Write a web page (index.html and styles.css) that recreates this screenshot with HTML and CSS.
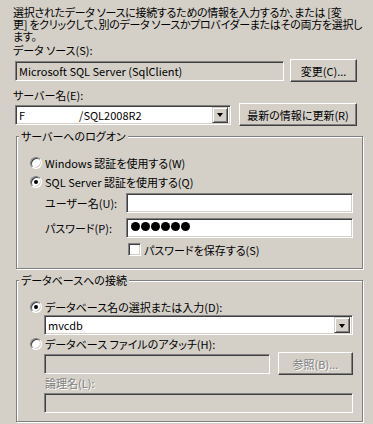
FILE: index.html
```html
<!DOCTYPE html>
<html>
<head>
<meta charset="UTF-8">
<title>接続の追加</title>
<link rel="stylesheet" href="styles.css">
</head>
<body>
<div class="dlg">

<p class="intro">選択されたデータ ソースに接続するための情報を入力するか、または [変<br>更] をクリックして、別のデータ ソースかプロバイダーまたはその両方を選択し<br>ます。</p>

<div class="lbl lblSrc">データ ソース(S):</div>
<div class="row rowSrc">
<div class="edit readonly editSrc">Microsoft SQL Server (SqlClient)</div>
<button class="btn btnChange">変更(C)...</button>
</div>

<div class="lbl lblSrv">サーバー名(E):</div>
<div class="row rowSrv">
<div class="combo comboSrv"><span class="comboText">F<span class="hidden"></span>/SQL2008R2</span><span class="dropBtn"><span class="arrow"></span></span></div>
<button class="btn btnRefresh">最新の情報に更新(R)</button>
</div>

<fieldset class="group grpLogon">
<legend>サーバーへのログオン</legend>
<div class="groupBody">
<div class="opt optWin"><span class="radio"></span>Windows 認証を使用する(W)</div>
<div class="opt optSql"><span class="radio on"></span>SQL Server 認証を使用する(Q)</div>
<div class="field fieldUser"><span class="fieldLbl">ユーザー名(U):</span><div class="edit editCred"></div></div>
<div class="field fieldPwd"><span class="fieldLbl">パスワード(P):</span><div class="edit editCred pwd"><span class="dot"></span><span class="dot"></span><span class="dot"></span><span class="dot"></span><span class="dot"></span><span class="dot"></span></div></div>
<div class="chk"><span class="box"></span>パスワードを保存する(S)</div>
</div>
</fieldset>

<fieldset class="group grpDb">
<legend>データベースへの接続</legend>
<div class="groupBody">
<div class="opt optName"><span class="radio on"></span>データベース名の選択または入力(D):</div>
<div class="combo comboDb"><span class="comboText">mvcdb</span><span class="dropBtn"><span class="arrow"></span></span></div>
<div class="opt optFile"><span class="radio"></span>データベース ファイルのアタッチ(H):</div>
<div class="row rowFile">
<div class="edit readonly editFile"></div>
<button class="btn btnBrowse disabled">参照(B)...</button>
</div>
<div class="lbl disabled lblLogical">論理名(L):</div>
<div class="edit readonly editLogical"></div>
</div>
</fieldset>

</div>
</body>
</html>
```

FILE: styles.css
```css
body{
margin: 0;
background: #d4d0c8;
color: #000;
font: 11px/12px "Noto Sans CJK JP", sans-serif;
font-feature-settings: "palt";
}

.dlg{
width: 373px;
height: 424px;
overflow: hidden;
}

.intro{
margin: 0;
padding: 6px 0 0 13px;
white-space: nowrap;
letter-spacing: -0.3px;
}

.lbl{
height: 12px;
padding-left: 13px;
white-space: nowrap;
}

.lblSrc{
margin-top: 2px;
}

.lblSrv{
margin-top: 7px;
}

.row{
display: flex;
align-items: center;
}

.rowSrc{
height: 23px;
margin: 3px 0 0 15px;
gap: 6px;
}

.rowSrv{
height: 23px;
margin: 2px 0 0 15px;
gap: 8px;
}

/* sunken text boxes */
.edit, .combo{
box-sizing: border-box;
height: 20px;
background: #fff;
border: 1px solid;
border-color: #808080 #fff #fff #808080;
box-shadow: inset 1px 1px #404040, inset -1px -1px #d4d0c8;
padding: 3px 0 0 3px;
white-space: nowrap;
overflow: hidden;
}

.readonly{
background: #d4d0c8;
}

.editSrc{
width: 269px;
}

/* raised buttons */
.btn{
box-sizing: border-box;
height: 23px;
margin: 0;
padding: 0;
font: inherit;
color: #000;
background: #d4d0c8;
border: 1px solid;
border-color: #fff #404040 #404040 #fff;
box-shadow: inset -1px -1px #808080;
display: flex;
align-items: center;
justify-content: center;
white-space: nowrap;
}

.btnChange{
width: 67px;
}

.btnRefresh{
width: 118px;
}

.combo{
display: flex;
padding: 0 2px 0 0;
}

.comboText{
flex: 1;
padding: 3px 0 0 3px;
}

.comboSrv{
width: 216px;
}

.hidden{
display: inline-block;
width: 54px;
}

.dropBtn{
box-sizing: border-box;
width: 16px;
height: 16px;
margin-top: 1px;
background: #d4d0c8;
border: 1px solid;
border-color: #d4d0c8 #404040 #404040 #d4d0c8;
box-shadow: inset 1px 1px #fff, inset -1px -1px #808080;
display: flex;
align-items: center;
justify-content: center;
}

.arrow{
width: 0;
height: 0;
margin-top: 1px;
border-left: 3.5px solid transparent;
border-right: 3.5px solid transparent;
border-top: 4px solid #000;
}

/* etched group boxes */
.group{
box-sizing: border-box;
width: 347px;
min-width: 0;
margin: 4px 0 0 16px;
padding: 0;
border: 1px solid #808080;
box-shadow: inset 1px 1px #fff, 1px 1px #fff;
}

.group legend{
margin-left: 2px;
padding: 0 2px;
background: #d4d0c8;
line-height: 12px;
white-space: nowrap;
}

.groupBody{
padding: 15px 0 12px 13px;
}

.grpDb{
margin-top: 5px;
}

.grpDb .groupBody{
padding-bottom: 8px;
}

.opt{
display: flex;
align-items: center;
height: 12px;
white-space: nowrap;
}

.radio{
box-sizing: border-box;
position: relative;
width: 12px;
height: 12px;
margin-right: 3px;
background: #fff;
border: 1px solid;
border-color: #808080 #fff #fff #808080;
border-radius: 50%;
box-shadow: inset 1px 1px #404040, inset -1px -1px #d4d0c8;
}

.radio.on::after{
content: "";
position: absolute;
left: 3px;
top: 3px;
width: 4px;
height: 4px;
border-radius: 50%;
background: #000;
}

.optSql{
margin-top: 7px;
}

.field{
display: flex;
align-items: center;
margin: 5px 0 0 15px;
}

.fieldLbl{
width: 81px;
white-space: nowrap;
}

.editCred{
width: 227px;
}

.pwd{
display: flex;
gap: 1px;
padding: 3px 0 0 4px;
}

.dot{
width: 9px;
height: 9px;
border-radius: 50%;
background: #000;
}

.chk{
display: flex;
align-items: center;
height: 13px;
margin: 5px 0 0 98px;
white-space: nowrap;
}

.box{
box-sizing: border-box;
width: 13px;
height: 13px;
margin-right: 3px;
background: #fff;
border: 1px solid;
border-color: #808080 #fff #fff #808080;
box-shadow: inset 1px 1px #404040, inset -1px -1px #d4d0c8;
}

.comboDb{
width: 309px;
margin: 2px 0 0 14px;
}

.optFile{
margin-top: 3px;
}

.rowFile{
height: 23px;
margin: 2px 0 0 14px;
gap: 8px;
}

.editFile{
width: 226px;
}

.btnBrowse{
width: 75px;
}

.disabled{
color: #808080;
text-shadow: 1px 1px #fff;
}

.lblLogical{
margin-top: 2px;
padding-left: 15px;
}

.editLogical{
width: 309px;
margin: 4px 0 0 14px;
}
```
